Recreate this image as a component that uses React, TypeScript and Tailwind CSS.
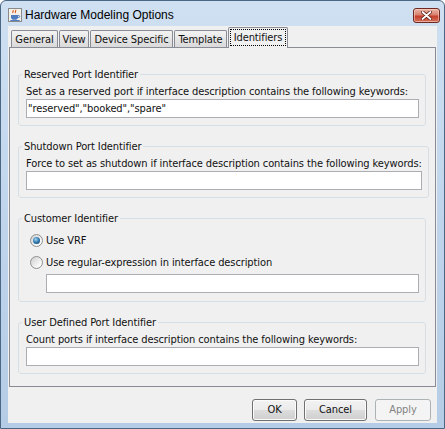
import React from "react";

function JavaIcon() {
  return (
    <svg width="14" height="14" viewBox="0 0 14 14" className="shrink-0">
      <rect x="0.5" y="0.5" width="13" height="13" fill="#f4f1e8" stroke="#8a8a8a" />
      <path d="M5 2.2c1 1-1 1.6 0 2.8M7.5 1.8c1.2 1.2-1.2 2 0 3.2" stroke="#e0541c" strokeWidth="1.1" fill="none" />
      <path d="M3 7h7v2.2c0 1.6-1.4 2.6-3.5 2.6S3 10.8 3 9.2z" fill="#4f7cbf" />
      <path d="M10 7.6h1.1c.9 0 .9 1.8 0 1.8H10" stroke="#4f7cbf" strokeWidth="0.9" fill="none" />
      <rect x="2.3" y="12" width="9.4" height="1" fill="#4f7cbf" />
    </svg>
  );
}

function CloseButton() {
  return (
    <div className="mt-[5px] self-start w-[27px] h-[15px] rounded-[3px] border border-[#6e2a22] bg-[linear-gradient(#eab3a6,#d9826f_45%,#c4402c_55%,#d4705c)] flex items-center justify-center shadow-[inset_0_0_0_1px_rgba(255,220,210,0.55)]">
      <svg width="11" height="9" viewBox="0 0 11 9">
        <path d="M1.5 1l8 7M9.5 1l-8 7" stroke="#5b1e14" strokeWidth="3.4" strokeLinecap="round" />
        <path d="M1.5 1l8 7M9.5 1l-8 7" stroke="#ffffff" strokeWidth="1.8" strokeLinecap="round" />
      </svg>
    </div>
  );
}

function Tab({ label, w }: { label: string; w: string }) {
  return (
    <div
      className={`${w} h-[17px] rounded-t-[2px] border-t border-l border-r border-[#898c95] bg-linear-to-b from-[#f3f3f3] via-[#e6e6e6] to-[#dadada] flex items-center justify-center leading-[13px] whitespace-nowrap`}
    >
      {label}
    </div>
  );
}

function Field({ value, className = "" }: { value?: string; className?: string }) {
  return (
    <div className={`h-[19px] border border-[#abadb3] bg-white pl-[1px] leading-[17px] whitespace-nowrap ${className}`}>
      {value}
    </div>
  );
}

function Radio({ checked }: { checked?: boolean }) {
  return (
    <div className="w-[13px] h-[13px] rounded-full border border-[#8e8f8f] bg-[linear-gradient(135deg,#cfcfcf,#f6f6f6_70%,#ffffff)] flex items-center justify-center shrink-0">
      {checked && (
        <div className="w-[7px] h-[7px] rounded-full bg-[radial-gradient(circle_at_40%_35%,#9bd3f2,#2a6fa6_55%,#0e3a5f)]" />
      )}
    </div>
  );
}

function Group({ title, children }: { title: string; children: React.ReactNode }) {
  return (
    <fieldset className="border border-[#d5dfe5] rounded-[3px]">
      <legend className="ml-[3px] px-[2px] leading-[13px]">{title}</legend>
      {children}
    </fieldset>
  );
}

function Button({ label, w, disabled }: { label: string; w: string; disabled?: boolean }) {
  return disabled ? (
    <div className={`${w} h-[22px] rounded-[3px] border border-[#adb2b5] bg-[#f4f4f4] text-[#838383] flex items-center justify-center`}>
      {label}
    </div>
  ) : (
    <div
      className={`${w} h-[22px] rounded-[3px] border border-[#707070] bg-[linear-gradient(#f2f2f2,#ebebeb_50%,#dddddd_50%,#cfcfcf)] shadow-[inset_0_0_0_1px_#fbfbfb] flex items-center justify-center`}
    >
      {label}
    </div>
  );
}

export default function App() {
  return (
    <div className="w-[445px] h-[429px] overflow-hidden bg-white text-[11px] tracking-[-0.1px] text-[#111111] font-['DejaVu_Sans_Condensed','DejaVu_Sans',sans-serif] font-stretch-condensed">
      <div className="w-full h-full flex flex-col rounded-t-[6px] border border-[#4a6784] bg-linear-to-b from-[#cfe0f2] via-[#c0d5ec] to-[#b5cce6]">
        {/* title bar */}
        <div className="h-[25px] pt-[2px] pl-[7px] pr-[4px] flex items-center shrink-0">
          <JavaIcon />
          <span className="ml-[3px] font-['Liberation_Sans',sans-serif] text-[12px] tracking-normal text-black">
            Hardware Modeling Options
          </span>
          <div className="ml-auto self-stretch flex">
            <CloseButton />
          </div>
        </div>

        {/* client area */}
        <div className="mx-[7px] mb-[5px] flex-1 bg-[#f0f0f0] flex flex-col">
          {/* tabs */}
          <div className="h-[21px] pt-[1px] pl-[3px] flex items-end gap-[1px] relative z-10">
            <Tab label="General" w="w-[47px]" />
            <Tab label="View" w="w-[30px]" />
            <Tab label="Device Specific" w="w-[83px]" />
            <Tab label="Template" w="w-[53px]" />
            <div className="w-[60px] h-[21px] -mb-[1px] rounded-t-[2px] border-t border-l border-r border-[#898c95] bg-[#f0f0f0] px-[1px] pt-[1px]">
              <div className="h-[17px] border border-dotted border-black flex items-center justify-center leading-[13px] whitespace-nowrap">
                Identifiers
              </div>
            </div>
          </div>

          {/* panel */}
          <div className="mx-[1px] h-[340px] border border-[#898c95] bg-[#f0f0f0] pt-[20px] pl-[8px] pr-[9px] flex flex-col gap-[14px]">
            <Group title="Reserved Port Identifier">
              <div className="pl-[7px] pr-[6px] pt-[4px] pb-[7px]">
                <div className="leading-[13px] whitespace-nowrap">
                  Set as a reserved port if interface description contains the following keywords:
                </div>
                <Field value={'"reserved","booked","spare"'} className="mt-[1px]" />
              </div>
            </Group>

            <Group title="Shutdown Port Identifier">
              <div className="pl-[7px] pr-[6px] pt-[4px] pb-[7px]">
                <div className="leading-[13px] whitespace-nowrap">
                  Force to set as shutdown if interface description contains the following keywords:
                </div>
                <Field className="mt-[1px]" />
              </div>
            </Group>

            <Group title="Customer Identifier">
              <div className="pl-[11px] pr-[6px] pt-[4px] pb-[8px]">
                <div className="h-[22px] flex items-center gap-[3px]">
                  <Radio checked />
                  <span className="leading-[13px]">Use VRF</span>
                </div>
                <div className="h-[22px] flex items-center gap-[3px]">
                  <Radio />
                  <span className="leading-[13px]">Use regular-expression in interface description</span>
                </div>
                <Field className="mt-[1px] ml-[16px]" />
              </div>
            </Group>

            <Group title="User Defined Port Identifier">
              <div className="pl-[7px] pr-[6px] pt-[4px] pb-[7px]">
                <div className="leading-[13px] whitespace-nowrap">
                  Count ports if interface description contains the following keywords:
                </div>
                <Field className="mt-[1px]" />
              </div>
            </Group>
          </div>

          {/* buttons */}
          <div className="mt-[12px] pr-[6px] flex justify-end">
            <Button label="OK" w="w-[45px]" />
            <div className="w-[7px]" />
            <Button label="Cancel" w="w-[63px]" />
            <div className="w-[8px]" />
            <Button label="Apply" w="w-[56px]" disabled />
          </div>
        </div>
      </div>
    </div>
  );
}
